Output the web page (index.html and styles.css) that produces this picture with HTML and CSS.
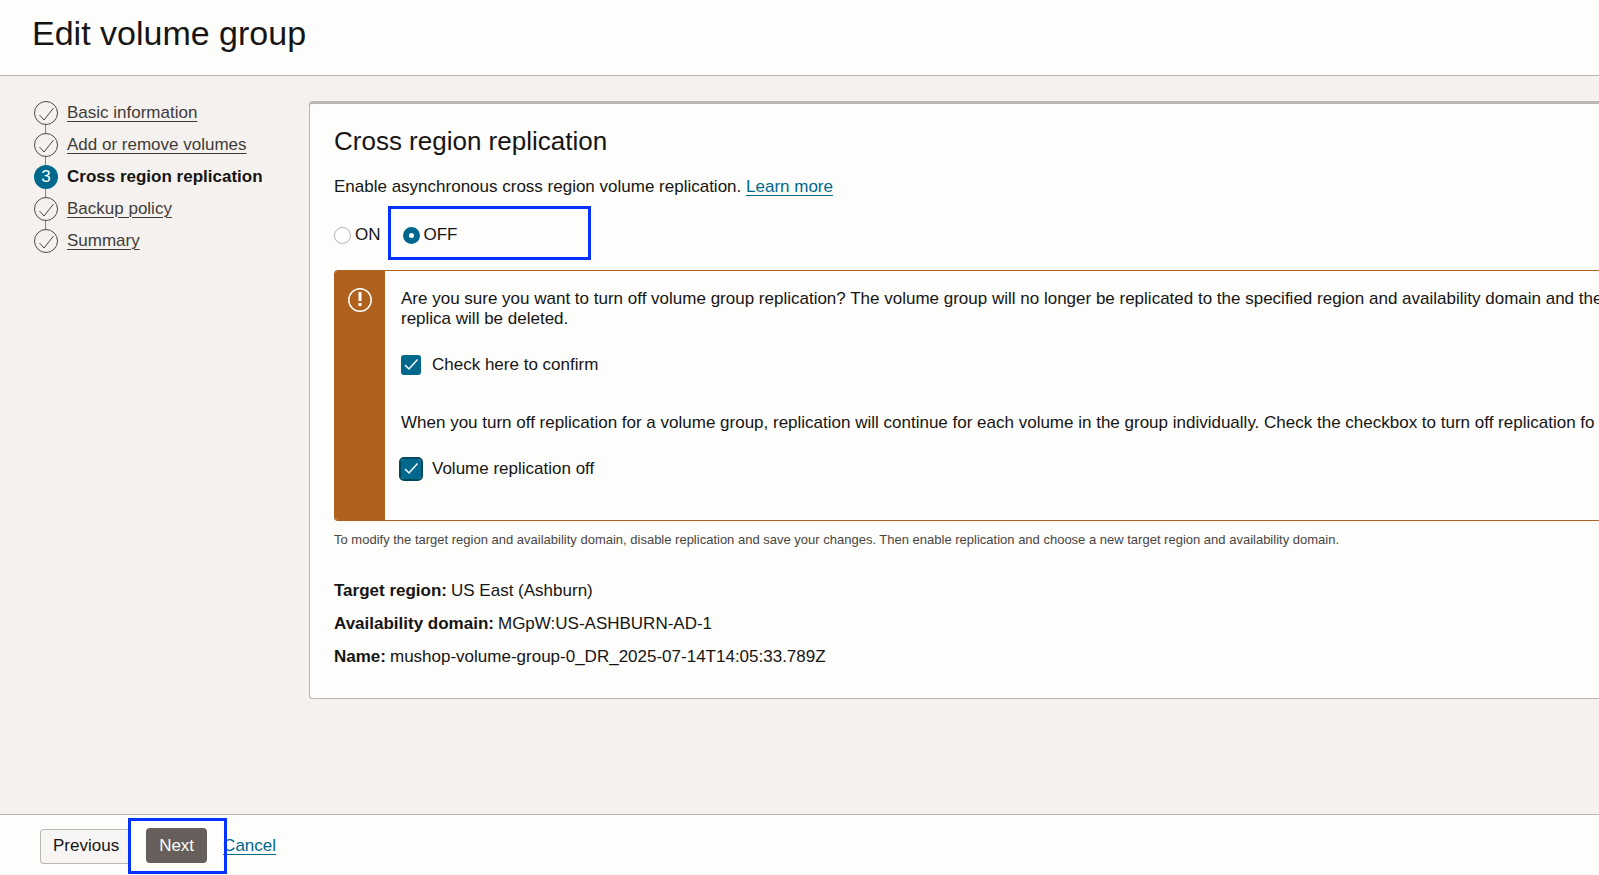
FILE: index.html
```html
<!DOCTYPE html>
<html lang="en">
<head>
<meta charset="utf-8">
<title>Edit volume group</title>
<link rel="stylesheet" href="styles.css">
</head>
<body>
<header class="header"><h1 class="title">Edit volume group</h1></header>
<div class="body">
  <nav class="steps" aria-label="Steps">
    <ol class="step-list">
      <li class="step"><svg class="dot" viewBox="0 0 24 24" aria-hidden="true"><circle cx="12" cy="12" r="11.5"/><path d="M5.500 14 10 19l9.500-12"/></svg><a class="step-link" href="#">Basic information</a></li>
      <li class="step"><svg class="dot" viewBox="0 0 24 24" aria-hidden="true"><circle cx="12" cy="12" r="11.5"/><path d="M5.500 14 10 19l9.500-12"/></svg><a class="step-link" href="#">Add or remove volumes</a></li>
      <li class="step step-current" aria-current="step"><span class="number">3</span><span>Cross region replication</span></li>
      <li class="step"><svg class="dot" viewBox="0 0 24 24" aria-hidden="true"><circle cx="12" cy="12" r="11.5"/><path d="M5.500 14 10 19l9.500-12"/></svg><a class="step-link" href="#">Backup policy</a></li>
      <li class="step"><svg class="dot" viewBox="0 0 24 24" aria-hidden="true"><circle cx="12" cy="12" r="11.5"/><path d="M5.500 14 10 19l9.500-12"/></svg><a class="step-link" href="#">Summary</a></li>
    </ol>
  </nav>
  <main class="card">
    <h2 class="heading">Cross region replication</h2>
    <p class="intro">Enable asynchronous cross region volume replication. <a class="link" href="#">Learn more</a></p>
    <div class="radios" role="radiogroup" aria-label="Replication">
      <label class="radio-label"><input class="radio" type="radio" name="replication">ON</label>
      <div class="off-choice"><label class="radio-label"><input class="radio" type="radio" name="replication" checked>OFF</label></div>
    </div>
    <section class="alert">
      <div class="alert-side">
        <svg class="alert-icon" viewBox="0 0 24 24" aria-hidden="true"><circle cx="12" cy="12" r="11.200"/><path d="M12 4v9M12 15v3"/></svg>
      </div>
      <div class="alert-body">
        <p class="text">Are you sure you want to turn off volume group replication? The volume group will no longer be replicated to the specified region and availability domain and the<br>replica will be deleted.</p>
        <label class="check-label"><span class="check-box"><input class="check" type="checkbox" checked><svg class="tick" viewBox="0 0 20 20" aria-hidden="true"><path d="M4 10 8 14 16.500 4.500"/></svg></span>Check here to confirm</label>
        <p class="text text-second">When you turn off replication for a volume group, replication will continue for each volume in the group individually. Check the checkbox to turn off replication fo</p>
        <label class="check-label"><span class="check-box"><input class="check check-focus" type="checkbox" checked><svg class="tick" viewBox="0 0 20 20" aria-hidden="true"><path d="M4 10 8 14 16.500 4.500"/></svg></span>Volume replication off</label>
      </div>
    </section>
    <p class="hint">To modify the target region and availability domain, disable replication and save your changes. Then enable replication and choose a new target region and availability domain.</p>
    <dl class="facts">
      <div class="fact"><dt>Target region:</dt><dd>US East (Ashburn)</dd></div>
      <div class="fact"><dt>Availability domain:</dt><dd>MGpW:US-ASHBURN-AD-1</dd></div>
      <div class="fact"><dt>Name:</dt><dd>mushop-volume-group-0_DR_2025-07-14T14:05:33.789Z</dd></div>
    </dl>
  </main>
</div>
<footer class="footer">
  <button class="button" type="button">Previous</button>
  <div class="next-choice"><button class="button button-primary" type="button">Next</button></div>
  <a class="link" href="#">Cancel</a>
</footer>
</body>
</html>
```
FILE: styles.css
```css
* { box-sizing: border-box; }
body {
  margin: 0;
  min-height: 100vh;
  display: flex;
  flex-direction: column;
  overflow: hidden;
  background: #f5f1ef;
  color: #161513;
  font: 17px/20px "Liberation Sans", Arial, sans-serif;
}
h1, h2, p, ol, dl, dd { margin: 0; padding: 0; font-weight: 400; }
.header {
  padding: 13px 32px 22px;
  background: #fdfdfc;
  border-bottom: 1px solid #bcb6b1;
}
.title { font-size: 34px; line-height: 40px; }
.body {
  flex: 1;
  display: flex;
  align-items: flex-start;
  padding: 25px 0 32px;
}
.steps { flex: 0 0 309px; padding-left: 34px; }
.step-list { display: flex; flex-direction: column; gap: 8px; list-style: none; }
.step { position: relative; display: flex; align-items: center; gap: 9px; height: 24px; white-space: nowrap; }
.step:not(:last-child)::after {
  content: "";
  position: absolute;
  left: 11px;
  top: 24px;
  width: 1px;
  height: 8px;
  background: #86817d;
}
.dot { width: 24px; height: 24px; fill: none; stroke: #4b4845; stroke-width: 1; }
.number {
  width: 24px;
  height: 24px;
  border-radius: 50%;
  background: #00688c;
  color: #fff;
  font-weight: 400;
  line-height: 24px;
  text-align: center;
}
.step-current { font-weight: 700; }
.step-link { color: #3f3c39; text-decoration-thickness: 1px; text-underline-offset: 3px; }
.card {
  flex: 1 0 auto;
  width: calc(100% - 309px);
  padding: 21px 24px 31px;
  background: #fdfdfc;
  border: 1px solid #bcb6b1;
  border-top-width: 3px;
  border-right: 0;
  border-radius: 4px 0 0 4px;
  white-space: nowrap;
}
.heading { font-size: 26px; line-height: 32px; }
.intro { margin-top: 20px; }
.link { color: #00688c; text-decoration-thickness: 1px; text-underline-offset: 3px; }
.radios { display: flex; align-items: flex-start; gap: 7px; margin-top: 9px; }
.radio-label { display: flex; align-items: center; gap: 4px; height: 20px; }
.radios > .radio-label { margin-top: 19px; }
.radio {
  appearance: none;
  width: 17px;
  height: 17px;
  margin: 0;
  border: 1px solid #b4aeaa;
  border-radius: 50%;
  background: #fff;
}
.radio:checked { border: 6px solid #00688c; }
.off-choice { width: 203px; padding: 16px 12px 12px; border: 3px solid #0433ff; }
.alert {
  display: flex;
  margin-top: 10px;
  margin-right: -24px;
  border: 1px solid #b0611e;
  border-right: 0;
  border-radius: 4px 0 0 4px;
  overflow: hidden;
}
.alert-side { flex: 0 0 50px; padding: 17px 13px; background: #b0611e; }
.alert-icon { display: block; width: 24px; height: 24px; fill: none; stroke: #fff; stroke-width: 1.5; }
.alert-icon path { stroke-width: 3; }
.alert-body { padding: 18px 16px 41px; }
.check-label { display: flex; align-items: center; gap: 11px; margin-top: 26px; }
.check-box { position: relative; width: 20px; height: 20px; }
.check { appearance: none; display: block; width: 20px; height: 20px; margin: 0; border-radius: 3px; background: #00688c; }
.check-focus { outline: 2px solid #00485f; }
.tick { position: absolute; inset: 0; fill: none; stroke: #fff; stroke-width: 1.5; pointer-events: none; }
.text-second { margin-top: 38px; }
.hint { margin-top: 9px; color: #494643; font-size: 13px; }
.facts { display: flex; flex-direction: column; gap: 13px; margin-top: 31px; }
.fact { display: flex; gap: 4px; }
dt { font-weight: 700; }
.footer {
  display: flex;
  align-items: center;
  padding: 3px 40px 1px;
  background: #fdfdfc;
  border-top: 1px solid #bcb6b1;
}
.button {
  height: 35px;
  padding: 0 11px 0 12px;
  border: 1px solid #bcb6b1;
  border-right-width: 0;
  border-radius: 4px 0 0 4px;
  background: #f7f5f4;
  color: #161513;
  font: inherit;
}
.button-primary { border: 0; border-radius: 4px; padding: 0 13px; background: #665f5b; color: #fff; }
.next-choice {
  position: relative;
  z-index: 1;
  margin: 0 -4px 0 -2px;
  padding: 7px 17px 8px 15px;
  border: 3px solid #0433ff;
}
```
